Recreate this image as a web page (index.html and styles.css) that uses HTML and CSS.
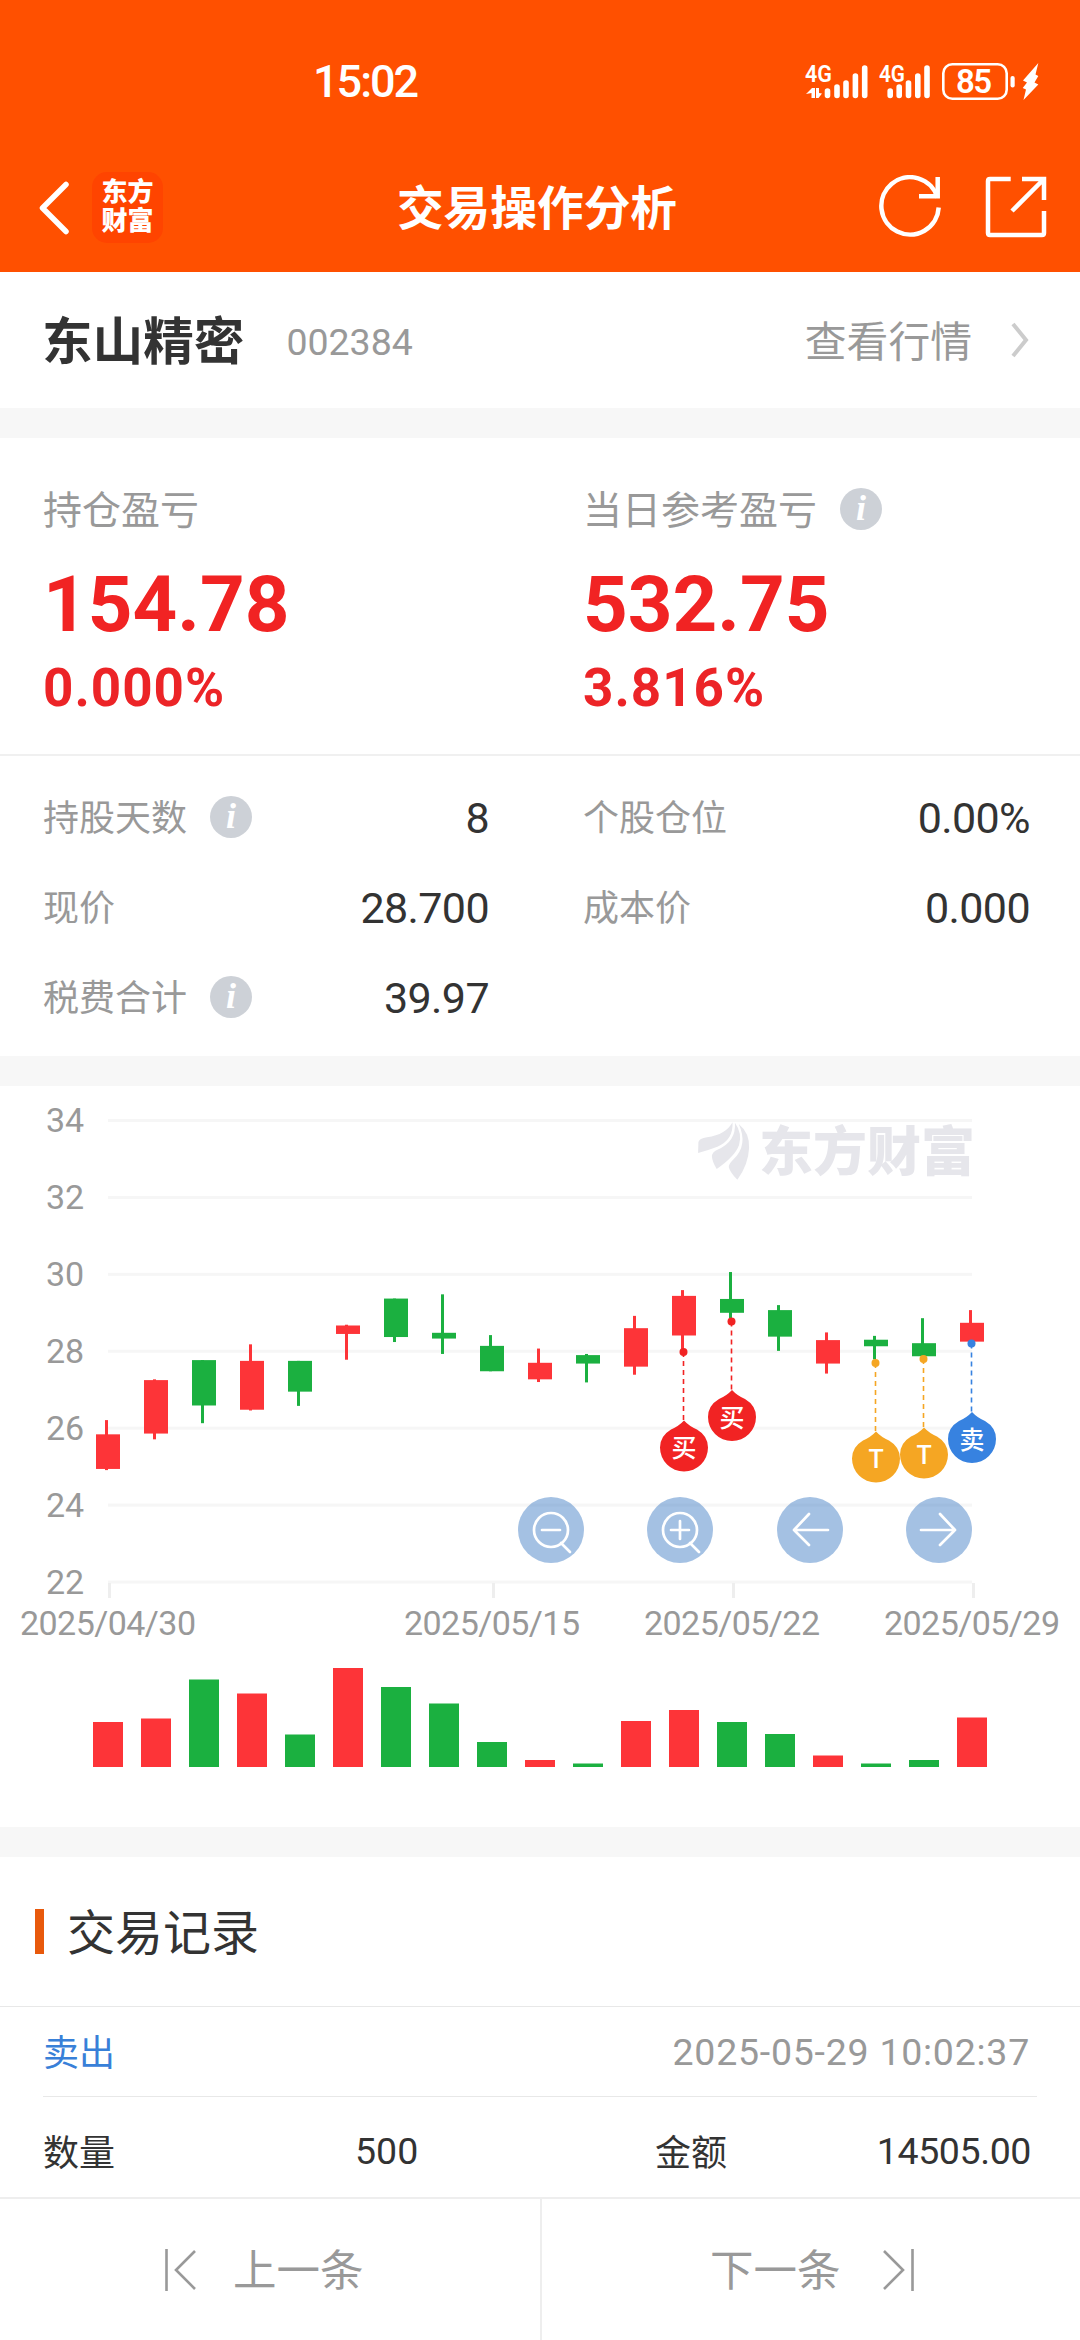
FILE: index.html
```html
<!DOCTYPE html>
<html lang="zh-CN">
<head>
	<meta charset="UTF-8">
	<meta name="viewport" content="width=device-width, initial-scale=1.0">
	<title>交易操作分析</title>
	<link rel="stylesheet" href="styles.css">
</head>
<body>
	<header class="header">
		<div class="status">
			<span class="time">15:02</span>
			<svg class="status-icons" width="242" height="44" viewBox="800 58 242 44">
				<g fill="#fff">
					<text x="805" y="80.5" font-size="23" font-weight="600" textLength="27" lengthAdjust="spacingAndGlyphs">4G</text>
					<text x="879" y="80.5" font-size="23" font-weight="600" textLength="26" lengthAdjust="spacingAndGlyphs">4G</text>
					<path d="M806 93L812 87H815V97H811.500V92ZM816 87H819V92L822 92.500L818.500 97H816Z"/>
				</g>
				<g stroke="#fff" stroke-width="5.600" stroke-linecap="round">
					<path d="M827.500 90V94.500M837 86V94.500M846 82V94.500M855.400 75V94.500M864.700 67V94.500"/>
					<path d="M890.200 90V94.500M899.200 86V94.500M908.500 82V94.500M917.800 75V94.500M927 67V94.500"/>
				</g>
				<rect x="943.300" y="63.300" width="63.400" height="34.400" rx="9" fill="none" stroke="#fff" stroke-width="2.600"/>
				<rect x="1010.500" y="75" width="4.200" height="11.500" rx="2" fill="#fff"/>
				<text x="974" y="92.300" font-size="33" font-weight="600" text-anchor="middle" textLength="36" fill="#fff">85</text>
				<path d="M1038.300 62L1023 79.500L1027 81.500L1022.700 87L1026 88.500L1023.500 99L1038.300 83.500L1034.500 81.500L1038.300 75L1035.500 73.500Z" fill="#fff"/>
			</svg>
		</div>
		<div class="navbar">
			<svg class="back" width="30" height="54" viewBox="0 0 30 54"><path d="M27 3.500L3.500 27L27 50.500"/></svg>
			<div class="logo">东方<br>财富</div>
			<h1>交易操作分析</h1>
			<svg class="nav-icon refresh" width="64" height="64" viewBox="0 0 64 64">
				<path d="M60.700 32.500A28.700 28.700 0 1 1 59.500 22.500"/>
				<path d="M59.700 2V21.300H41"/>
			</svg>
			<svg class="nav-icon" width="64" height="64" viewBox="0 0 64 64">
				<path d="M26.700 4H6Q4 4 4 6V58Q4 60 6 60H58Q60 60 60 58V36"/>
				<path d="M38 4H60V25M60 4L28 36"/>
			</svg>
		</div>
	</header>

	<main class="content">
		<section class="stock">
			<h2>东山精密</h2>
			<span class="code">002384</span>
			<a class="quote">查看行情</a>
			<svg width="18" height="36" viewBox="0 0 18 36"><path d="M2 2L15 18L2 34"/></svg>
		</section>

		<section class="summary">
			<div class="profits">
				<div class="profit">
					<p class="label"><span>持仓盈亏</span></p>
					<p class="amount">154.78</p>
					<p class="percent">0.000%</p>
				</div>
				<div class="profit">
					<p class="label"><span>当日参考盈亏</span><i class="info">i</i></p>
					<p class="amount">532.75</p>
					<p class="percent">3.816%</p>
				</div>
			</div>
			<div class="details">
				<div class="detail"><span>持股天数</span><i class="info">i</i><b>8</b></div>
				<div class="detail"><span>个股仓位</span><b>0.00%</b></div>
				<div class="detail"><span>现价</span><b>28.700</b></div>
				<div class="detail"><span>成本价</span><b>0.000</b></div>
				<div class="detail"><span>税费合计</span><i class="info">i</i><b>39.97</b></div>
			</div>
		</section>

		<section class="chart">
			<svg id="kline" width="1080" height="741" viewBox="0 0 1080 741">
				<g id="grid"></g>
				<g fill="#e6e6eb">
					<g transform="translate(540 -16) scale(.3444 .3333)">
						<path d="M459 249L460 216Q462 206 485 202Q540 194 559 157Q562 210 515 230Q490 240 459 249Z"/>
						<path d="M513 297Q500 275 499 258Q500 246 515 239Q570 215 566 158Q588 190 578 225Q567 258 513 297Z"/>
						<path d="M573 329Q550 305 548 290Q550 280 562 268Q605 225 577 162Q610 190 607 235Q605 285 573 329Z"/>
					</g>
					<text class="watermark" x="759" y="85" textLength="216" lengthAdjust="spacingAndGlyphs">东方财富</text>
				</g>
				<g id="candles"></g>
				<g id="volumes"></g>
				<g id="pins"></g>
			</svg>
			<div class="tools">
				<button><svg viewBox="-33 -33 66 66"><circle r="17"/><path d="M-9 0H9M10 13L19 22"/></svg></button>
				<button><svg viewBox="-33 -33 66 66"><circle r="17"/><path d="M-9 0H9M0 -9V9M10 13L19 22"/></svg></button>
				<button><svg viewBox="-33 -33 66 66"><path d="M18 0H-16M-1 -16L-16 0L-1 15"/></svg></button>
				<button><svg viewBox="-33 -33 66 66"><path d="M-18 0H16M1 -16L16 0L1 15"/></svg></button>
			</div>
		</section>

		<section class="records">
			<h3><span>交易记录</span></h3>
			<div class="record-head">
				<span class="sell">卖出</span>
				<time>2025-05-29 10:02:37</time>
			</div>
			<div class="record-body">
				<span>数量</span>
				<span class="count">500</span>
				<span>金额</span>
				<span class="money">14505.00</span>
			</div>
		</section>
	</main>

	<footer class="pager">
		<a class="prev">
			<svg width="32" height="44" viewBox="0 0 32 44"><path d="M1.500 1V43M30 3L11 22L30 41"/></svg>
			<span>上一条</span>
		</a>
		<a class="next">
			<span>下一条</span>
			<svg width="32" height="44" viewBox="0 0 32 44"><path d="M30.500 1V43M2 3L21 22L2 41"/></svg>
		</a>
	</footer>

	<script type="text/javascript">
		const RED = '#fd3438'
		const GREEN = '#1bb040'

		// open, close, high, low, volume
		const days = [
			[24.94, 25.84, 26.21, 24.91, 45],
			[25.86, 27.25, 27.27, 25.71, 48.5],
			[27.77, 26.59, 27.77, 26.13, 87.5],
			[26.48, 27.75, 28.18, 26.46, 73.5],
			[27.75, 26.95, 27.75, 26.58, 32.5],
			[28.45, 28.67, 28.69, 27.78, 99],
			[29.37, 28.37, 29.37, 28.24, 80],
			[28.48, 28.33, 29.48, 27.93, 63.5],
			[28.14, 27.48, 28.42, 27.48, 25],
			[27.27, 27.70, 28.07, 27.20, 7],
			[27.90, 27.68, 27.93, 27.19, 3.5],
			[27.60, 28.60, 28.92, 27.39, 46],
			[28.41, 29.44, 29.59, 28.06, 57],
			[29.36, 29.00, 30.06, 28.86, 45],
			[29.07, 28.38, 29.20, 28.01, 33],
			[27.68, 28.29, 28.49, 27.42, 11.5],
			[28.30, 28.13, 28.40, 27.79, 3.5],
			[28.21, 27.87, 28.86, 27.87, 7],
			[28.25, 28.74, 29.07, 28.25, 49.5]
		]
		const dates = { 0: '2025/04/30', 8: '2025/05/15', 13: '2025/05/22', 18: '2025/05/29' }
		const pins = [
			{ day: 12, y: 266, text: '买', color: '#f12323' },
			{ day: 13, y: 235.5, text: '买', color: '#f12323' },
			{ day: 16, y: 277, text: 'T', color: '#f5a623' },
			{ day: 17, y: 273, text: 'T', color: '#f5a623' },
			{ day: 18, y: 257.5, text: '卖', color: '#3782e0' }
		]

		const x = i => 108 + i * 48
		const y = price => 34.5 + (34 - price) * 38.46

		let grid = ''
		for (let p = 34; p >= 22; p -= 2) {
			grid += `<rect x="108" y="${y(p) - 1.5}" width="864" height="3" fill="#f6f6f6"/>`
			grid += `<text class="axis" x="46" y="${y(p) + 11.5}">${p}</text>`
		}
		for (const i in dates) {
			grid += `<rect x="${x(+i)}" y="497" width="3" height="15" fill="#eee"/>`
			grid += `<text class="axis" x="${x(+i)}" y="549" text-anchor="middle" textLength="176">${dates[i]}</text>`
		}
		document.querySelector('#grid').innerHTML = grid

		let candles = ''
		let volumes = ''
		days.forEach(([open, close, high, low, vol], i) => {
			const color = close > open ? RED : GREEN
			const top = y(Math.max(open, close))
			const bottom = y(Math.min(open, close))
			candles += `<rect x="${x(i) - 3}" y="${y(high)}" width="3" height="${y(low) - y(high)}" fill="${color}"/>`
			candles += `<rect x="${x(i) - 12}" y="${top}" width="24" height="${bottom - top}" fill="${color}"/>`
			volumes += `<rect x="${x(i) - 15}" y="${681 - vol}" width="30" height="${vol}" fill="${color}"/>`
		})
		document.querySelector('#candles').innerHTML = candles
		document.querySelector('#volumes').innerHTML = volumes

		document.querySelector('#pins').innerHTML = pins.map(p => `
			<g transform="translate(${x(p.day)} ${p.y})" fill="${p.color}">
				<circle cx="-.5" r="4"/>
				<path d="M-.5 0V68" stroke="${p.color}" stroke-width="1.600" stroke-dasharray="5 4"/>
				<path d="M0 68.500Q5 74 13 77.500Q24 84 24 95.500A24 24 0 0 1 -24 95.500Q-24 84 -13 77.500Q-5 74 0 68.500Z"/>
				<text class="pin-text" x="0" y="105">${p.text}</text>
			</g>`).join('')
	</script>
</body>
</html>
```

FILE: styles.css
```css
* {
	box-sizing: border-box;
	padding: 0;
	margin: 0;
}

body {
	width: 1080px;
	height: 2340px;
	overflow: hidden;
	display: flex;
	flex-direction: column;
	font-family: Roboto, 'Noto Sans CJK SC', sans-serif;
	background: #f7f7f7;
	color: #333;
}

svg {
	display: block;
	flex: none;
}

/* header */
.header {
	height: 272px;
	background: #ff5000;
	color: #fff;
}

.status {
	height: 144px;
	padding: 18px 38px 0 313px;
	display: flex;
	align-items: center;
	justify-content: space-between;
}

.time {
	font-size: 45px;
	font-weight: 500;
	letter-spacing: -2px;
}

.navbar {
	height: 128px;
	padding: 0 32px 0 39px;
	display: flex;
	align-items: center;
}

.back {
	fill: none;
	stroke: #fff;
	stroke-width: 5.5;
	stroke-linecap: round;
	stroke-linejoin: round;
}

.logo {
	width: 71px;
	height: 71px;
	margin: -2px 0 0 23px;
	padding-top: 6px;
	border-radius: 15px;
	background: #ff4400;
	font-size: 26px;
	font-weight: 900;
	line-height: 29.5px;
	text-align: center;
}

.navbar h1 {
	flex: 1;
	padding: 0 5px 7px 0;
	margin-left: 38px;
	font-size: 46.7px;
	font-weight: 700;
	text-align: center;
}

.nav-icon {
	fill: none;
	stroke: #fff;
	stroke-width: 4.5;
	margin: -2px 0 0 42px;
}

.refresh {
	margin-left: 0;
}

/* sections */
.content {
	flex: 1;
	display: flex;
	flex-direction: column;
	gap: 30px;
}

.content > section {
	background: #fff;
}

.stock {
	height: 136px;
	padding: 0 51px 0 42px;
	display: flex;
	align-items: center;
}

.stock h2 {
	padding-bottom: 5px;
	font-size: 50.6px;
	font-weight: 700;
}

.code {
	padding-top: 4px;
	margin-left: 42px;
	font-size: 37.5px;
	color: #999;
}

.quote {
	padding-bottom: 3px;
	margin: 0 39px 0 auto;
	font-size: 41.8px;
	color: #999;
}

.stock svg {
	fill: none;
	stroke: #ccc;
	stroke-width: 4;
}

.summary {
	height: 618px;
}

.profits {
	height: 318px;
	padding: 42px 43px 0;
	display: grid;
	grid-template-columns: 540px 1fr;
	border-bottom: 2px solid #f0f0f0;
}

.label {
	height: 58px;
	display: flex;
	align-items: center;
	font-size: 39px;
	color: #999;
}

.label span,
.detail span {
	padding-bottom: 4px;
}

.info {
	width: 42px;
	height: 42px;
	margin-left: 23px;
	border-radius: 50%;
	background: #cdd1d7;
	color: #fff;
	font: italic bold 36px/40px 'Liberation Serif', serif;
	text-align: center;
}

.amount {
	height: 104px;
	line-height: 133px;
	font-size: 78px;
	font-weight: 700;
	color: #f12323;
}

.percent {
	line-height: 93px;
	font-size: 53px;
	font-weight: 700;
	letter-spacing: 1px;
	color: #ec2427;
}

.details {
	padding: 16px 50px 0 43px;
	display: grid;
	grid-template-columns: 446px 447px;
	column-gap: 94px;
	grid-auto-rows: 90px;
}

.detail {
	display: flex;
	align-items: center;
	font-size: 36px;
	color: #999;
}

.detail b {
	padding-top: 1px;
	margin-left: auto;
	font-size: 43px;
	font-weight: 400;
	letter-spacing: -0.6px;
	color: #333;
}

/* chart */
.chart {
	position: relative;
	height: 741px;
}

.axis {
	font-size: 34px;
	fill: #999;
}

.watermark {
	font-size: 53px;
	font-weight: 900;
}

.pin-text {
	font-size: 25px;
	font-weight: 500;
	fill: #fff;
	text-anchor: middle;
}

/* zoom and pan buttons lie over the plot */
.tools {
	position: absolute;
	top: 411px;
	left: 518px;
	width: 454px;
	display: flex;
	justify-content: space-between;
}

.tools button {
	width: 66px;
	height: 66px;
	border: none;
	border-radius: 50%;
	background: rgba(57, 120, 194, 0.46);
}

.tools svg {
	fill: none;
	stroke: #fff;
	stroke-width: 2.7;
	stroke-linecap: round;
	stroke-linejoin: round;
}

/* records */
.records {
	flex: 1;
}

.records h3 {
	height: 150px;
	padding-left: 35px;
	display: flex;
	align-items: center;
	font-size: 48px;
	font-weight: 400;
	border-bottom: 1px solid #e8e8e8;
}

.records h3 span {
	padding-bottom: 6px;
}

.records h3::before {
	content: '';
	width: 9px;
	height: 45px;
	margin-right: 23px;
	background: #e8590c;
}

.record-head {
	height: 90px;
	margin: 0 43px;
	padding-right: 7px;
	display: flex;
	align-items: center;
	justify-content: space-between;
	font-size: 36px;
	border-bottom: 1px solid #e8e8e8;
}

.sell {
	padding-bottom: 3px;
	color: #3880d8;
}

.record-head time {
	padding-top: 1px;
	font-size: 37.5px;
	letter-spacing: 0.75px;
	color: #999;
}

.record-body {
	height: 100px;
	padding: 5px 49px 0 43px;
	display: grid;
	grid-template-columns: 312px 300px 100px 1fr;
	align-items: center;
	font-size: 36px;
}

.count,
.money {
	padding-top: 2px;
	font-size: 37.5px;
}

.money {
	letter-spacing: -0.4px;
	text-align: right;
}

/* pager */
.pager {
	flex: none;
	height: 143px;
	display: flex;
	background: #fff;
	border-top: 2px solid #eee;
	font-size: 43.5px;
	color: #999;
}

.pager a {
	display: flex;
	align-items: center;
	gap: 36px;
}

.pager span {
	padding-bottom: 5px;
}

.pager svg {
	fill: none;
	stroke: #999;
	stroke-width: 2.6;
}

.prev {
	width: 542px;
	padding-left: 165px;
	border-right: 2px solid #eee;
}

.pager .next {
	gap: 41px;
	padding-left: 168px;
}
```
